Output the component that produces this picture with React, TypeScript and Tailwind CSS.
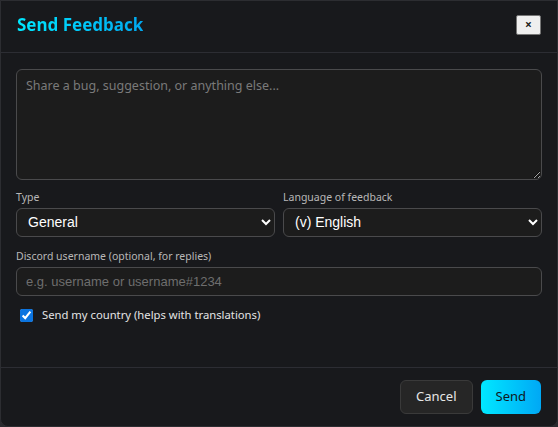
import React from 'react';

const segoe = { fontFamily: '"Noto Sans", "Open Sans", sans-serif' };

export default function App() {
  return (
    <div className="w-[558px] h-[427px] bg-[#2a2b2f] font-['Noto_Sans',sans-serif]">
      <div className="flex flex-col w-full h-full bg-[#18191c] border border-[#2c2d31] rounded-b-lg overflow-hidden">
        {/* Header */}
        <div className="flex items-center justify-between h-[52px] pt-[13px] pb-[17px] pl-4 pr-4 border-b border-[#2c2d33] shrink-0">
          <h2 className="text-[17px] font-bold leading-none bg-gradient-to-r from-[#00e8ff] to-[#00a8f0] bg-clip-text text-transparent">
            Send Feedback
          </h2>
          <button className="flex items-center justify-center w-[25px] h-[20px] bg-[#efefef] border border-[#767676] rounded-[2px] text-[#222] text-[12px] leading-none font-bold">
            ×
          </button>
        </div>

        {/* Body */}
        <div className="flex flex-col px-[15px] pt-4 flex-1">
          <textarea
            className="w-full h-[111px] bg-[#1c1c1c] border border-[#4a4a4c] rounded-md px-[9px] py-[7px] text-[12.5px] text-white placeholder:text-[#7a7a7a] outline-none"
            style={segoe}
            placeholder="Share a bug, suggestion, or anything else..."
          />

          <div className="grid grid-cols-2 gap-2 mt-[11px]">
            <div className="flex flex-col">
              <label className="text-[10.5px] text-[#b8b8b8] leading-none mb-[5px] pt-[1px]">Type</label>
              <select className="h-[29px] bg-[#1c1c1c] border border-[#4a4a4c] rounded-md pl-[7px] pr-1 text-[14px] text-white font-['Liberation_Sans',Arial,sans-serif] outline-none [color-scheme:dark]">
                <option>General</option>
              </select>
            </div>
            <div className="flex flex-col">
              <label className="text-[10.5px] text-[#b8b8b8] leading-none mb-[5px] pt-[1px]">Language of feedback</label>
              <select className="h-[29px] bg-[#1c1c1c] border border-[#4a4a4c] rounded-md pl-[7px] pr-1 text-[14px] text-white font-['Liberation_Sans',Arial,sans-serif] outline-none [color-scheme:dark]">
                <option>(v) English</option>
              </select>
            </div>
          </div>

          <label className="text-[10.5px] text-[#b8b8b8] leading-none mt-[13px] mb-[6px] pt-[1px]">
            Discord username (optional, for replies)
          </label>
          <input
            className="h-[29px] bg-[#1c1c1c] border border-[#4a4a4c] rounded-md px-[9px] text-[13px] text-white placeholder:text-[#6e6e6e] font-['Liberation_Sans',Arial,sans-serif] outline-none"
            placeholder="e.g. username or username#1234"
          />

          <label className="flex items-center gap-[9px] mt-[11px] pl-[4px]">
            <input type="checkbox" defaultChecked className="w-[13px] h-[13px] m-0 accent-[#0b74e0]" />
            <span className="text-[11.25px] text-[#e4e4e4]">Send my country (helps with translations)</span>
          </label>
        </div>

        {/* Footer */}
        <div className="flex items-center justify-end gap-2 h-[59px] px-4 border-t border-[#2c2d33] shrink-0">
          <button className="h-[34px] px-[15px] bg-[#262626] border border-[#3a3a3a] rounded-md text-[13px] text-[#e6e6e6]">
            Cancel
          </button>
          <button className="h-[34px] px-[15px] bg-gradient-to-r from-[#00e8ff] to-[#00a8f5] rounded-md text-[13px] text-[#0f1620]">
            Send
          </button>
        </div>
      </div>
    </div>
  );
}
